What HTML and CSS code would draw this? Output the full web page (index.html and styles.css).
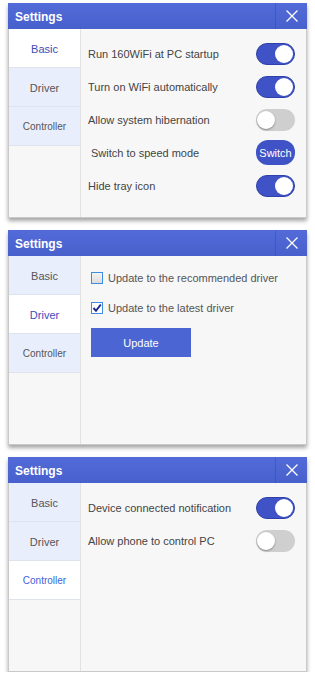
FILE: index.html
```html
<!DOCTYPE html>
<html lang="en">
<head>
    <meta charset="UTF-8">
    <meta name="viewport" content="width=device-width, initial-scale=1.0">
    <title>Settings</title>
    <link rel="stylesheet" href="styles.css">
</head>
<body>
    <div class="stack">
        <!-- Basic tab -->
        <div class="dialog first">
            <div class="titlebar">
                <span class="title">Settings</span>
                <span class="close"><svg width="12" height="12" viewBox="0 0 12 12"><path d="M0.5 0.5L11.5 11.5M11.5 0.5L0.5 11.5" stroke="#fff" stroke-width="1.3"/></svg></span>
            </div>
            <div class="body">
                <ul class="tabs">
                    <li class="active">Basic</li>
                    <li>Driver</li>
                    <li>Controller</li>
                </ul>
                <div class="content">
                    <div class="row"><span>Run 160WiFi at PC startup</span><span class="toggle on"></span></div>
                    <div class="row"><span>Turn on WiFi automatically</span><span class="toggle on"></span></div>
                    <div class="row"><span>Allow system hibernation</span><span class="toggle"></span></div>
                    <div class="row"><span class="indent">Switch to speed mode</span><span class="pill">Switch</span></div>
                    <div class="row"><span>Hide tray icon</span><span class="toggle on"></span></div>
                </div>
            </div>
        </div>

        <!-- Driver tab -->
        <div class="dialog">
            <div class="titlebar">
                <span class="title">Settings</span>
                <span class="close"><svg width="12" height="12" viewBox="0 0 12 12"><path d="M0.5 0.5L11.5 11.5M11.5 0.5L0.5 11.5" stroke="#fff" stroke-width="1.3"/></svg></span>
            </div>
            <div class="body">
                <ul class="tabs">
                    <li>Basic</li>
                    <li class="active">Driver</li>
                    <li>Controller</li>
                </ul>
                <div class="content driver">
                    <label class="check"><span class="box"></span>Update to the recommended driver</label>
                    <label class="check"><span class="box checked"><svg width="10" height="10" viewBox="0 0 10 10"><path d="M1.5 5L4 7.8L8.8 1.5" fill="none" stroke="#1a2a8c" stroke-width="2"/></svg></span>Update to the latest driver</label>
                    <button class="update">Update</button>
                </div>
            </div>
        </div>

        <!-- Controller tab -->
        <div class="dialog">
            <div class="titlebar">
                <span class="title">Settings</span>
                <span class="close"><svg width="12" height="12" viewBox="0 0 12 12"><path d="M0.5 0.5L11.5 11.5M11.5 0.5L0.5 11.5" stroke="#fff" stroke-width="1.3"/></svg></span>
            </div>
            <div class="body">
                <ul class="tabs">
                    <li>Basic</li>
                    <li>Driver</li>
                    <li class="active ctrl">Controller</li>
                </ul>
                <div class="content">
                    <div class="row"><span>Device connected notification</span><span class="toggle on"></span></div>
                    <div class="row"><span>Allow phone to control PC</span><span class="toggle"></span></div>
                </div>
            </div>
        </div>
    </div>
</body>
</html>
```

FILE: styles.css
```css
body {
    margin: 0;
    background: #fff;
    font-family: "Liberation Sans", Arial, sans-serif;
    font-size: 11px;
    color: #444;
}

.stack {
    display: flex;
    flex-direction: column;
    gap: 12px;
    padding: 3px 0 0 8px;
}

.dialog {
    width: 297px;
    border: 1px solid #c9c9c9;
    border-top: none;
    box-shadow: 0 3px 4px rgba(0,0,0,0.35);
    background: #f7f7f7;
}

.titlebar {
    height: 26px;
    display: flex;
    align-items: center;
    justify-content: space-between;
    background: linear-gradient(#526bd8, #4760cc);
    margin: 0 -1px;
}

.title {
    color: #fff;
    font-weight: bold;
    font-size: 12px;
    padding: 1px 0 0 7px;
}

.close {
    width: 31px;
    height: 26px;
    display: flex;
    align-items: center;
    justify-content: center;
    border-left: 1px solid rgba(0,0,0,0.12);
}

.body {
    display: flex;
    height: 188px;
}

.tabs {
    list-style: none;
    margin: 0;
    padding: 0;
    width: 71px;
    border-right: 1px solid #e2e2e2;
    flex-shrink: 0;
}

.tabs li {
    height: 36px;
    line-height: 36px;
    padding-top: 2px;
    text-align: center;
    background: #e9eefd;
    border-bottom: 1px solid #dfe3ee;
    color: #555;
    font-size: 11px;
}

.tabs li:nth-child(3) {
    font-size: 10px;
}

.tabs li.active {
    background: #fff;
    color: #3d4bb8;
}

.tabs li.ctrl {
    color: #3c63d8;
}

.content {
    flex-grow: 1;
    padding: 8px 11px 0 7px;
}

.row {
    height: 33px;
    display: flex;
    align-items: center;
    justify-content: space-between;
}

.indent {
    padding-left: 3px;
}

/* toggle switches */
.toggle {
    width: 39px;
    height: 22px;
    border-radius: 11px;
    background: #cfcfcf;
    position: relative;
    box-sizing: border-box;
}

.toggle::after {
    content: "";
    position: absolute;
    top: 2px;
    left: 1px;
    width: 18px;
    height: 18px;
    border-radius: 50%;
    background: #fff;
    box-shadow: 0 1px 2px rgba(0,0,0,0.35);
}

.toggle.on {
    background: #3f53c6;
    border: 1px solid #2f40a8;
}

.toggle.on::after {
    top: 1px;
    left: auto;
    right: 1px;
    box-shadow: none;
}

.pill {
    width: 39px;
    height: 25px;
    border-radius: 12px;
    background: #3f53c6;
    color: #fff;
    font-size: 11px;
    display: flex;
    align-items: center;
    justify-content: center;
}

/* driver tab */
.driver {
    padding-top: 7px;
    padding-left: 10px;
}

.check {
    display: flex;
    align-items: center;
    height: 30px;
    color: #555;
}

.box {
    width: 10px;
    height: 10px;
    border: 1px solid #3d8ee0;
    background: linear-gradient(#f4f4f4, #dcdcdc);
    margin-right: 5px;
    display: flex;
    align-items: center;
    justify-content: center;
}

.box.checked {
    background: #fff;
}

.update {
    margin-top: 5px;
    width: 100px;
    height: 29px;
    border: none;
    background: #4b66d2;
    color: #fff;
    font-family: "Liberation Sans", Arial, sans-serif;
    font-size: 11px;
}
```
